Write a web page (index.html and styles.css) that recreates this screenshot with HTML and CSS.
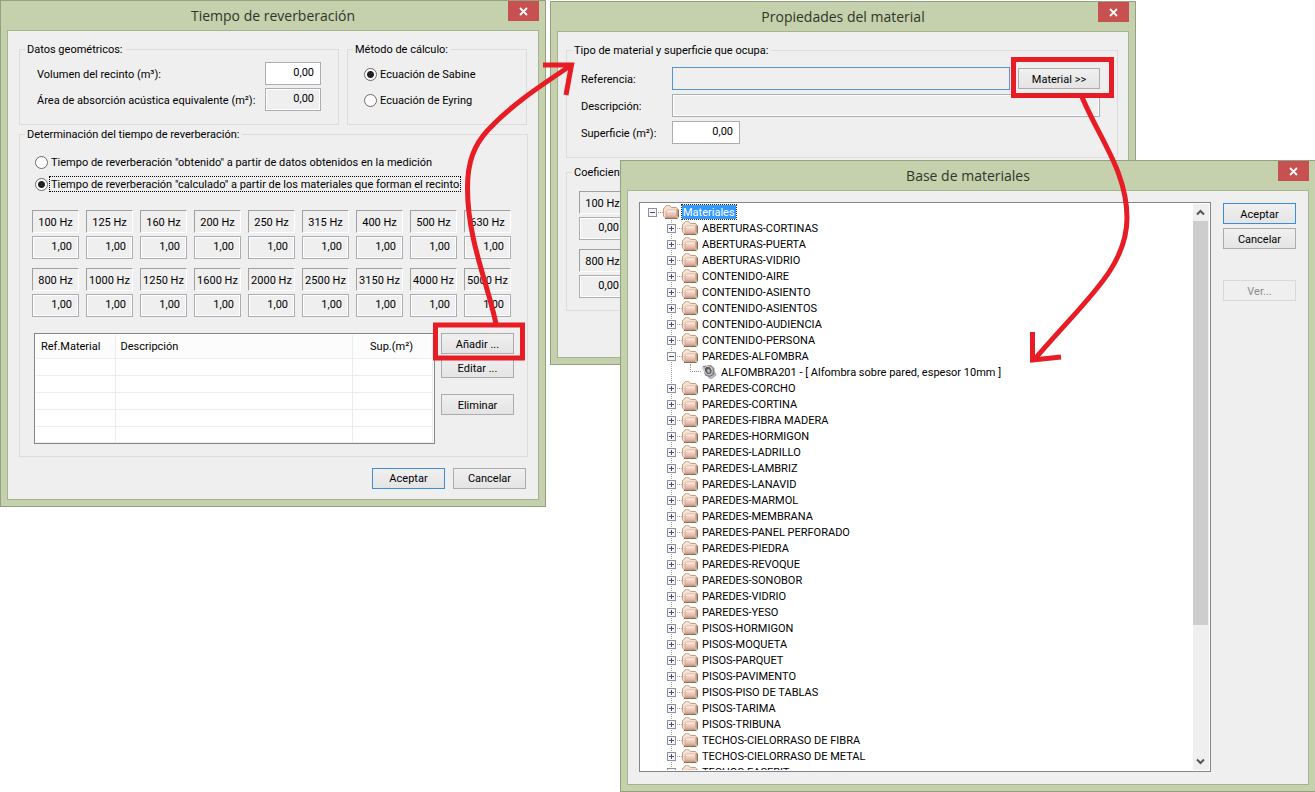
FILE: index.html
```html
<!DOCTYPE html>
<html lang="es">
<head>
<meta charset="utf-8">
<title>Tiempo de reverberación</title>
<link rel="stylesheet" href="styles.css">
</head>
<body>
<svg class="defs" aria-hidden="true">
  <defs>
    <linearGradient id="skin" x1="0" y1="0" x2="0" y2="1"><stop offset="0" stop-color="#fbeae0"/><stop offset="1" stop-color="#dca99b"/></linearGradient>
  </defs>
  <symbol id="folder" viewBox="0 0 16 14">
    <path d="M2 13.5h12.3l1.2-1.500V4.500" fill="none" stroke="#7d725e"/>
    <path d="M.5 11V3.500L2 2.500 3 .800h4L8.500 2.500h5l1 1.500v7.500l-1 1H2z" fill="#f8dfcf" stroke="#c79c78"/>
    <path d="M3 12V6.500L4.500 5H13.500v6.500l-1 .5z" fill="url(#skin)" stroke="#cf9f88" stroke-width=".8"/>
    <path d="M4.200 6h8.500M3.500 1.800h3" stroke="#fff3ea" stroke-width=".9"/>
  </symbol>
  <symbol id="speaker" viewBox="0 0 16 14">
    <path d="M6 9.500l6.500-4.500 2.700 5-4.500 3.600-2.200-.4z" fill="#b9bbcb" stroke="#8e90a2" stroke-width=".7"/>
    <path d="M2 1.500L10 .500l3 3-.5 6-4 2-4-1.200z" fill="#9c9c9c" stroke="#6b6b6b" stroke-width=".8"/>
    <ellipse cx="7.300" cy="5.500" rx="3.600" ry="4.300" transform="rotate(-28 7.300 5.500)" fill="#5c5c5c" stroke="#dcdcdc" stroke-width=".9"/>
    <ellipse cx="7.600" cy="6" rx="1.500" ry="2" transform="rotate(-28 7.600 6)" fill="#b4b4b4"/>
    <path d="M.5 3.500l2-2 1.500 6z" fill="#cfd0d8"/>
  </symbol>
  <symbol id="cross" viewBox="0 0 9 9"><path d="M1 1l7 7M8 1L1 8" stroke="#fff" stroke-width="1.800"/></symbol>
</svg>

<main class="desktop">
  <section class="window window-time">
    <header class="titlebar"><h1>Tiempo de reverberación</h1><button class="close" aria-label="Cerrar"><svg width="9" height="9"><use href="#cross"/></svg></button></header>
    <form class="client">
      <div class="group-row">
        <fieldset class="group grow">
          <legend>Datos geométricos:</legend>
          <div class="fields">
            <label for="vol">Volumen del recinto (m³):</label><input id="vol" class="box" value="0,00">
            <label for="area">Área de absorción acústica equivalente (m²):</label><input id="area" class="box readonly" value="0,00" readonly>
          </div>
        </fieldset>
        <fieldset class="group method">
          <legend>Método de cálculo:</legend>
          <div class="method-options">
            <label class="radio"><input type="radio" name="metodo" checked><span>Ecuación de Sabine</span></label>
            <label class="radio"><input type="radio" name="metodo"><span>Ecuación de Eyring</span></label>
          </div>
        </fieldset>
      </div>
      <fieldset class="group">
        <legend>Determinación del tiempo de reverberación:</legend>
        <div class="source-options">
          <label class="radio"><input type="radio" name="origen"><span>Tiempo de reverberación "obtenido" a partir de datos obtenidos en la medición</span></label>
          <label class="radio focused"><input type="radio" name="origen" checked><span>Tiempo de reverberación "calculado" a partir de los materiales que forman el recinto</span></label>
        </div>
        <div class="bands">
          <label class="band"><span>100 Hz</span><input class="box readonly" value="1,00" readonly></label>
          <label class="band"><span>125 Hz</span><input class="box readonly" value="1,00" readonly></label>
          <label class="band"><span>160 Hz</span><input class="box readonly" value="1,00" readonly></label>
          <label class="band"><span>200 Hz</span><input class="box readonly" value="1,00" readonly></label>
          <label class="band"><span>250 Hz</span><input class="box readonly" value="1,00" readonly></label>
          <label class="band"><span>315 Hz</span><input class="box readonly" value="1,00" readonly></label>
          <label class="band"><span>400 Hz</span><input class="box readonly" value="1,00" readonly></label>
          <label class="band"><span>500 Hz</span><input class="box readonly" value="1,00" readonly></label>
          <label class="band"><span>630 Hz</span><input class="box readonly" value="1,00" readonly></label>
          <label class="band"><span>800 Hz</span><input class="box readonly" value="1,00" readonly></label>
          <label class="band"><span>1000 Hz</span><input class="box readonly" value="1,00" readonly></label>
          <label class="band"><span>1250 Hz</span><input class="box readonly" value="1,00" readonly></label>
          <label class="band"><span>1600 Hz</span><input class="box readonly" value="1,00" readonly></label>
          <label class="band"><span>2000 Hz</span><input class="box readonly" value="1,00" readonly></label>
          <label class="band"><span>2500 Hz</span><input class="box readonly" value="1,00" readonly></label>
          <label class="band"><span>3150 Hz</span><input class="box readonly" value="1,00" readonly></label>
          <label class="band"><span>4000 Hz</span><input class="box readonly" value="1,00" readonly></label>
          <label class="band"><span>5000 Hz</span><input class="box readonly" value="1,00" readonly></label>
        </div>
        <div class="materials">
          <div class="grid-frame">
            <table>
              <colgroup><col class="col-ref"><col><col class="col-sup"></colgroup>
              <thead><tr><th>Ref.Material</th><th>Descripción</th><th class="right">Sup.(m²)</th></tr></thead>
              <tbody>
                <tr><td></td><td></td><td></td></tr>
                <tr><td></td><td></td><td></td></tr>
                <tr><td></td><td></td><td></td></tr>
                <tr><td></td><td></td><td></td></tr>
                <tr><td></td><td></td><td></td></tr>
              </tbody>
            </table>
          </div>
          <div class="side-buttons">
            <button type="button" class="btn">Añadir ...</button>
            <button type="button" class="btn">Editar ...</button>
            <button type="button" class="btn spaced">Eliminar</button>
          </div>
        </div>
      </fieldset>
      <div class="actions">
        <button type="button" class="btn default">Aceptar</button>
        <button type="button" class="btn">Cancelar</button>
      </div>
    </form>
  </section>

  <section class="window window-props">
    <header class="titlebar"><h1>Propiedades del material</h1><button class="close" aria-label="Cerrar"><svg width="9" height="9"><use href="#cross"/></svg></button></header>
    <form class="client">
      <fieldset class="group">
        <legend>Tipo de material y superficie que ocupa:</legend>
        <div class="props">
          <label for="ref">Referencia:</label>
          <div class="ref-line"><input id="ref" class="box readonly active" readonly><button type="button" class="btn">Material &gt;&gt;</button></div>
          <label for="desc">Descripción:</label><input id="desc" class="box readonly" readonly>
          <label for="sup">Superficie (m²):</label><input id="sup" class="box surface" value="0,00">
        </div>
      </fieldset>
      <fieldset class="group">
        <legend>Coeficientes:</legend>
        <div class="bands">
          <label class="band"><span>100 Hz</span><input class="box readonly" value="0,00" readonly></label>
          <label class="band"><span>800 Hz</span><input class="box readonly" value="0,00" readonly></label>
        </div>
      </fieldset>
    </form>
  </section>

  <section class="window window-base">
    <header class="titlebar"><h1>Base de materiales</h1><button class="close" aria-label="Cerrar"><svg width="9" height="9"><use href="#cross"/></svg></button></header>
    <div class="client">
      <div class="tree-frame">
        <ul class="tree">
          <li><div class="node"><button class="toggle open" aria-label="Contraer"></button><i></i><svg><use href="#folder"/></svg><span class="selected">Materiales</span></div>
            <ul>
              <li class="node"><button class="toggle" aria-label="Expandir"></button><i></i><svg><use href="#folder"/></svg><span>ABERTURAS-CORTINAS</span></li>
              <li class="node"><button class="toggle" aria-label="Expandir"></button><i></i><svg><use href="#folder"/></svg><span>ABERTURAS-PUERTA</span></li>
              <li class="node"><button class="toggle" aria-label="Expandir"></button><i></i><svg><use href="#folder"/></svg><span>ABERTURAS-VIDRIO</span></li>
              <li class="node"><button class="toggle" aria-label="Expandir"></button><i></i><svg><use href="#folder"/></svg><span>CONTENIDO-AIRE</span></li>
              <li class="node"><button class="toggle" aria-label="Expandir"></button><i></i><svg><use href="#folder"/></svg><span>CONTENIDO-ASIENTO</span></li>
              <li class="node"><button class="toggle" aria-label="Expandir"></button><i></i><svg><use href="#folder"/></svg><span>CONTENIDO-ASIENTOS</span></li>
              <li class="node"><button class="toggle" aria-label="Expandir"></button><i></i><svg><use href="#folder"/></svg><span>CONTENIDO-AUDIENCIA</span></li>
              <li class="node"><button class="toggle" aria-label="Expandir"></button><i></i><svg><use href="#folder"/></svg><span>CONTENIDO-PERSONA</span></li>
              <li><div class="node"><button class="toggle open" aria-label="Contraer"></button><i></i><svg><use href="#folder"/></svg><span>PAREDES-ALFOMBRA</span></div>
                <ul class="leaves">
                  <li class="node leaf"><b></b><svg><use href="#speaker"/></svg><span>ALFOMBRA201 - [ Alfombra sobre pared, espesor 10mm ]</span></li>
                </ul>
              </li>
              <li class="node"><button class="toggle" aria-label="Expandir"></button><i></i><svg><use href="#folder"/></svg><span>PAREDES-CORCHO</span></li>
              <li class="node"><button class="toggle" aria-label="Expandir"></button><i></i><svg><use href="#folder"/></svg><span>PAREDES-CORTINA</span></li>
              <li class="node"><button class="toggle" aria-label="Expandir"></button><i></i><svg><use href="#folder"/></svg><span>PAREDES-FIBRA MADERA</span></li>
              <li class="node"><button class="toggle" aria-label="Expandir"></button><i></i><svg><use href="#folder"/></svg><span>PAREDES-HORMIGON</span></li>
              <li class="node"><button class="toggle" aria-label="Expandir"></button><i></i><svg><use href="#folder"/></svg><span>PAREDES-LADRILLO</span></li>
              <li class="node"><button class="toggle" aria-label="Expandir"></button><i></i><svg><use href="#folder"/></svg><span>PAREDES-LAMBRIZ</span></li>
              <li class="node"><button class="toggle" aria-label="Expandir"></button><i></i><svg><use href="#folder"/></svg><span>PAREDES-LANAVID</span></li>
              <li class="node"><button class="toggle" aria-label="Expandir"></button><i></i><svg><use href="#folder"/></svg><span>PAREDES-MARMOL</span></li>
              <li class="node"><button class="toggle" aria-label="Expandir"></button><i></i><svg><use href="#folder"/></svg><span>PAREDES-MEMBRANA</span></li>
              <li class="node"><button class="toggle" aria-label="Expandir"></button><i></i><svg><use href="#folder"/></svg><span>PAREDES-PANEL PERFORADO</span></li>
              <li class="node"><button class="toggle" aria-label="Expandir"></button><i></i><svg><use href="#folder"/></svg><span>PAREDES-PIEDRA</span></li>
              <li class="node"><button class="toggle" aria-label="Expandir"></button><i></i><svg><use href="#folder"/></svg><span>PAREDES-REVOQUE</span></li>
              <li class="node"><button class="toggle" aria-label="Expandir"></button><i></i><svg><use href="#folder"/></svg><span>PAREDES-SONOBOR</span></li>
              <li class="node"><button class="toggle" aria-label="Expandir"></button><i></i><svg><use href="#folder"/></svg><span>PAREDES-VIDRIO</span></li>
              <li class="node"><button class="toggle" aria-label="Expandir"></button><i></i><svg><use href="#folder"/></svg><span>PAREDES-YESO</span></li>
              <li class="node"><button class="toggle" aria-label="Expandir"></button><i></i><svg><use href="#folder"/></svg><span>PISOS-HORMIGON</span></li>
              <li class="node"><button class="toggle" aria-label="Expandir"></button><i></i><svg><use href="#folder"/></svg><span>PISOS-MOQUETA</span></li>
              <li class="node"><button class="toggle" aria-label="Expandir"></button><i></i><svg><use href="#folder"/></svg><span>PISOS-PARQUET</span></li>
              <li class="node"><button class="toggle" aria-label="Expandir"></button><i></i><svg><use href="#folder"/></svg><span>PISOS-PAVIMENTO</span></li>
              <li class="node"><button class="toggle" aria-label="Expandir"></button><i></i><svg><use href="#folder"/></svg><span>PISOS-PISO DE TABLAS</span></li>
              <li class="node"><button class="toggle" aria-label="Expandir"></button><i></i><svg><use href="#folder"/></svg><span>PISOS-TARIMA</span></li>
              <li class="node"><button class="toggle" aria-label="Expandir"></button><i></i><svg><use href="#folder"/></svg><span>PISOS-TRIBUNA</span></li>
              <li class="node"><button class="toggle" aria-label="Expandir"></button><i></i><svg><use href="#folder"/></svg><span>TECHOS-CIELORRASO DE FIBRA</span></li>
              <li class="node"><button class="toggle" aria-label="Expandir"></button><i></i><svg><use href="#folder"/></svg><span>TECHOS-CIELORRASO DE METAL</span></li>
              <li class="node"><button class="toggle" aria-label="Expandir"></button><i></i><svg><use href="#folder"/></svg><span>TECHOS-EASERIT</span></li>
            </ul>
          </li>
        </ul>
        <div class="scrollbar">
          <button class="arrow" aria-label="Subir"><svg width="9" height="7"><path d="M1 5.500L4.500 2 8 5.500" fill="none" stroke="#555" stroke-width="2"/></svg></button>
          <div class="track"><div class="thumb"></div></div>
          <button class="arrow" aria-label="Bajar"><svg width="9" height="7"><path d="M1 1.500L4.500 5 8 1.500" fill="none" stroke="#555" stroke-width="2"/></svg></button>
        </div>
      </div>
      <div class="base-buttons">
        <button class="btn default">Aceptar</button>
        <button class="btn">Cancelar</button>
        <button class="btn detached" disabled>Ver...</button>
      </div>
    </div>
  </section>

  <svg class="marks" width="1315" height="792" aria-hidden="true">
    <g fill="none" stroke="#e81c24" stroke-width="5">
      <path d="M435.500 325h87v33h-87z"/>
      <path d="M1013.500 59.500h98v36h-98z"/>
      <path d="M496 324C488 284 467.500 240 467.500 188C467.500 162 474 145 488 130C510 106 540 86 570 66"/>
      <path d="M543 65H571.500L566 95"/>
      <path d="M1082 97C1100 140 1127 172 1127 218C1127 268 1085 300 1034 360"/>
      <path d="M1032.500 332V360L1061 357"/>
    </g>
  </svg>
</main>
</body>
</html>
```
FILE: styles.css
```css
* { box-sizing: border-box; }

body {
  margin: 0;
  background: #fff;
  color: #000;
  font: 11px/14px Roboto, "Noto Sans", sans-serif;
}

button, input { font: inherit; color: inherit; margin: 0; }
ul { list-style: none; margin: 0; padding: 0; }
.defs { position: absolute; width: 0; height: 0; }

.desktop { position: relative; min-height: 100vh; overflow: hidden; }

/* windows */
.window {
  position: absolute;
  display: flex;
  flex-direction: column;
  padding: 0 6px 6px;
  background: #c4d1ac;
  border: 1px solid #94a17f;
}
.window-time { left: 0; top: 0; width: 546px; }
.window-props { left: 550px; top: 1px; width: 586px; }
.window-base { left: 620px; top: 160px; right: -1px; bottom: 0; }

.titlebar {
  display: grid;
  grid-template-columns: 31px 1fr 31px;
  height: 29px;
  align-items: start;
}
.titlebar h1 {
  grid-column: 2;
  margin: 0;
  text-align: center;
  font: 400 14px/29px "Open Sans", sans-serif;
  color: #30352a;
}
.close {
  display: flex;
  align-items: center;
  justify-content: center;
  height: 20px;
  padding: 0;
  border: 0;
  background: #c75050;
}

.client {
  flex: 1;
  min-height: 0;
  padding: 11px 10px 10px 11px;
  background: #efefef;
  border: 1px solid #a5b38e;
}

/* groups */
.group {
  min-width: 0;
  margin: 0 0 2px;
  padding: 0;
  border: 1px solid #dcdcdc;
}
.group legend {
  height: 14px;
  margin-left: 5px;
  padding: 0 3px 0 2px;
  line-height: 16px;
}
.group-row { display: flex; gap: 8px; padding-right: 1px; }
.grow { flex: 1; }
.method { width: 180px; }

.fields {
  display: grid;
  grid-template-columns: 1fr 56px;
  gap: 3px;
  align-items: center;
  padding: 6px 17px 13px 17px;
}
.fields label, .props label { padding-top: 2px; }

.box {
  width: 100%;
  height: 23px;
  padding: 0 6px 2px;
  border: 1px solid #abadb3;
  border-radius: 0;
  background: #fff;
  text-align: right;
  outline: 0;
}
.readonly { background: #efefef; box-shadow: inset 0 0 0 1px #fff; }
.active { border-color: #5694cf; box-shadow: none; }

.radio { display: flex; align-items: center; gap: 2px; }
.radio span { padding: 0 1px; line-height: 16px; height: 14px; }
.radio input {
  appearance: none;
  width: 13px;
  height: 13px;
  border: 1px solid #6b6b6b;
  border-radius: 50%;
  background: #fff;
}
.radio input:checked { background: radial-gradient(circle, #222 0 3px, #fff 4px); }
.focused span { outline: 1px dotted #000; }
.method-options { padding: 5px 16px; }
.method-options .radio { height: 26px; }
.source-options { padding: 10px 15px 15px; }
.source-options .radio { height: 22px; }

.bands {
  display: grid;
  grid-template-columns: repeat(9, 47px);
  gap: 9px 7px;
  padding-left: 12px;
}
.band { display: flex; flex-direction: column; gap: 3px; }
.band span {
  height: 23px;
  line-height: 23px;
  text-align: center;
  white-space: nowrap;
  border: 1px solid #a0a0a0;
  border-right-color: #fff;
  border-bottom-color: #fff;
}

/* materials grid */
.materials { display: flex; gap: 6px; padding: 16px 13px 12px 14px; }
.grid-frame { flex: 1; padding: 1px 1px 0; border: 1px solid #82858c; background: #fff; }
.grid-frame table { width: 100%; table-layout: fixed; border-collapse: collapse; }
.col-ref { width: 79px; }
.col-sup { width: 80px; }
.grid-frame th {
  height: 23px;
  padding: 2px 5px 0;
  text-align: left;
  font-weight: 400;
  background: #fcfcfc;
  border-bottom: 1px solid #ececf0;
  border-right: 1px solid #e6eef6;
}
.grid-frame th.right { text-align: right; padding-right: 19px; }
.grid-frame td { height: 17px; padding: 0; border: 1px solid #ececec; border-left: 0; }
.grid-frame tr:last-child td { height: 16px; }

.side-buttons { display: flex; flex-direction: column; gap: 3px; width: 73px; }
.btn {
  flex: none;
  width: 73px;
  height: 21px;
  padding: 2px 0 0;
  border: 1px solid #acacac;
  border-radius: 0;
  background: linear-gradient(#f0f0f0, #e4e4e4);
}
.btn.default { border-color: #3c8dd8; }
.btn:disabled { color: #8c8c8c; border-color: #d9d9d9; background: #efefef; }
.spaced { margin-top: 13px; }
.actions { display: flex; justify-content: flex-end; gap: 8px; padding: 9px 2px 0 0; }

/* material properties */
.window-props .client { padding: 11px 10px 39px 8px; }
.window-props .group { margin-bottom: 7px; }
.props {
  display: grid;
  grid-template-columns: 88px 1fr;
  gap: 4px 3px;
  align-items: center;
  padding: 10px 17px 13px 14px;
}
.ref-line { display: flex; gap: 8px; align-items: center; }
.ref-line .box { flex: 1; }
.ref-line .btn { width: 82px; }
.props .surface { width: 68px; }
.window-props .bands { grid-template-columns: 47px; gap: 9px; padding: 12px; }

/* material database */
.window-base .client { display: flex; gap: 12px; padding: 11px 12px 12px 11px; }
.tree-frame {
  flex: 1;
  display: flex;
  min-width: 0;
  padding: 1px;
  border: 1px solid #82858c;
  background: #fff;
}
.tree { flex: 1; padding-left: 7px; overflow: hidden; }
.tree ul {
  padding-left: 19px;
  background: repeating-linear-gradient(#999 0 1px, #fff 1px 2px) 23px 0 / 1px 100% no-repeat;
}
.tree .leaves { background: none; }
.node { display: flex; align-items: center; height: 16px; white-space: nowrap; }
.node svg { width: 16px; height: 14px; }
.node span { margin-left: 3px; padding: 0 1px; height: 14px; line-height: 16px; }
.node .selected { background: #3399ff; color: #fff; outline: 1px dotted #333; }
.node i { width: 6px; height: 1px; background: repeating-linear-gradient(90deg, #fff 0 1px, #999 1px 2px); }
.leaf b {
  width: 11px;
  height: 8px;
  margin-left: 4px;
  align-self: flex-start;
  border-left: 1px dotted #999;
  border-bottom: 1px dotted #999;
}
.toggle {
  width: 9px;
  height: 9px;
  padding: 0;
  border: 1px solid #919191;
  background:
    linear-gradient(#3a4f8f, #3a4f8f) center / 5px 1px no-repeat,
    linear-gradient(#3a4f8f, #3a4f8f) center / 1px 5px no-repeat,
    #f6f6f6;
}
.toggle.open { background: linear-gradient(#3a4f8f, #3a4f8f) center / 5px 1px no-repeat, #f6f6f6; }

.scrollbar { display: flex; flex-direction: column; width: 16px; padding-right: 1px; background: #efefef; }
.arrow {
  display: flex;
  align-items: center;
  justify-content: center;
  height: 17px;
  padding: 0;
  border: 0;
  background: none;
}
.track { flex: 1; }
.thumb { height: 76%; background: #cdcdcd; }

.base-buttons { display: flex; flex-direction: column; gap: 4px; padding-top: 1px; }
.detached { margin-top: 27px; }

.marks { position: absolute; left: 0; top: 0; pointer-events: none; }
```
